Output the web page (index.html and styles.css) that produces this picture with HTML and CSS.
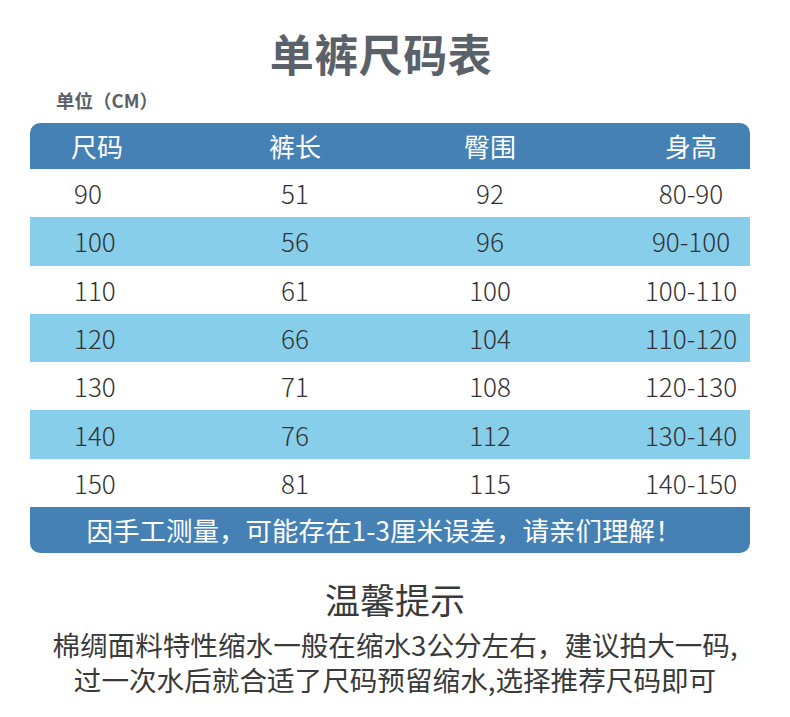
FILE: index.html
```html
<!DOCTYPE html>
<html lang="zh-CN">
<head>
<meta charset="utf-8">
<title>单裤尺码表</title>
<link rel="stylesheet" href="styles.css">
</head>
<body>
<div class="page">
  <h1 class="title">单裤尺码表</h1>
  <div class="unit">单位（CM）</div>
  <div class="table">
    <div class="row head">
      <div class="c c1">尺码</div><div class="c">裤长</div><div class="c">臀围</div><div class="c c4">身高</div>
    </div>
    <div class="row"><div class="c c1">90</div><div class="c">51</div><div class="c">92</div><div class="c c4">80-90</div></div>
    <div class="row alt"><div class="c c1">100</div><div class="c">56</div><div class="c">96</div><div class="c c4">90-100</div></div>
    <div class="row"><div class="c c1">110</div><div class="c">61</div><div class="c">100</div><div class="c c4">100-110</div></div>
    <div class="row alt"><div class="c c1">120</div><div class="c">66</div><div class="c">104</div><div class="c c4">110-120</div></div>
    <div class="row"><div class="c c1">130</div><div class="c">71</div><div class="c">108</div><div class="c c4">120-130</div></div>
    <div class="row alt"><div class="c c1">140</div><div class="c">76</div><div class="c">112</div><div class="c c4">130-140</div></div>
    <div class="row"><div class="c c1">150</div><div class="c">81</div><div class="c">115</div><div class="c c4">140-150</div></div>
    <div class="foot">因手工测量，可能存在1-3厘米误差，请亲们理解！</div>
  </div>
  <h2 class="tip-title">温馨提示</h2>
  <div class="tip">
    <div class="tip-line">棉绸面料特性缩水一般在缩水3公分左右，建议拍大一码,</div>
    <div class="tip-line">过一次水后就合适了尺码预留缩水,选择推荐尺码即可</div>
  </div>
</div>
</body>
</html>
```
FILE: styles.css
```css
* { box-sizing: border-box; margin: 0; padding: 0; }
html, body { background: #fff; }
body {
  font-family: "Noto Sans CJK SC", "Noto Sans", sans-serif;
  width: 790px;
  height: 717px;
  overflow: hidden;
}
.page { padding-top: 24px; }
.title {
  font-size: 44px;
  font-weight: 700;
  color: #5b6169;
  text-align: center;
  padding-right: 28px;
  line-height: 58px;
  letter-spacing: 0.5px;
}
.unit {
  margin-top: 6px;
  padding-left: 56px;
  font-size: 18.5px;
  font-weight: 700;
  color: #5b6169;
  line-height: 24px;
}
.table {
  margin: 11px 40px 0 30px;
  width: 720px;
}
.row {
  display: grid;
  grid-template-columns: 168px 194px 196px 162px;
  height: 48.3px;
  align-items: center;
  color: #333;
  font-size: 26px;
  font-weight: 300;
}
.row.head {
  height: 46px;
  background: #4581b4;
  color: #fff;
  border-radius: 10px 10px 0 0;
  font-size: 26px;
  font-weight: 400;
}
.row.alt { background: #87ceeb; }
.c { text-align: center; line-height: 30px; }
.c1 { text-align: left; padding-left: 44px; }
.head .c1 { padding-left: 41px; }
.c4 { padding-left: 44px; }
.foot {
  height: 46px;
  background: #4581b4;
  color: #fff;
  border-radius: 0 0 10px 10px;
  font-size: 26.5px;
  line-height: 46px;
  text-align: center;
  padding-right: 12px;
}
.tip-title {
  margin-top: 24px;
  font-size: 35px;
  font-weight: 400;
  color: #3a3a3a;
  text-align: center;
  line-height: 44px;
}
.tip {
  margin-top: 6px;
  display: flex;
  flex-direction: column;
  gap: 1px;
  font-size: 27.6px;
  color: #3a3a3a;
  text-align: center;
  font-weight: 400;
}
.tip-line { line-height: 34px; }
```
